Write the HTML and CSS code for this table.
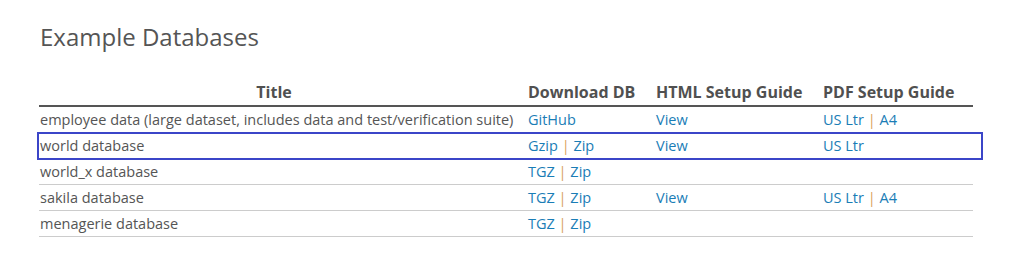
FILE: index.html
```html
<!DOCTYPE html>
<html>
<head>
<meta charset="utf-8">
<link rel="stylesheet" href="styles.css">
</head>
<body>
<main class="page">
  <h1 class="title">Example Databases</h1>
  <div class="table-wrap">
    <table class="db-table">
      <colgroup>
        <col class="c-title"><col class="c-dl"><col class="c-html"><col class="c-pdf">
      </colgroup>
      <thead>
        <tr>
          <th class="center">Title</th>
          <th>Download DB</th>
          <th>HTML Setup Guide</th>
          <th>PDF Setup Guide</th>
        </tr>
      </thead>
      <tbody>
        <tr>
          <td>employee data (large dataset, includes data and test/verification suite)</td>
          <td><a href="#">GitHub</a></td>
          <td><a href="#">View</a></td>
          <td><a href="#">US Ltr</a> <span class="sep">|</span> <a href="#">A4</a></td>
        </tr>
        <tr class="selected">
          <td>world database</td>
          <td><a href="#">Gzip</a> <span class="sep">|</span> <a href="#">Zip</a></td>
          <td><a href="#">View</a></td>
          <td><a href="#">US Ltr</a></td>
        </tr>
        <tr>
          <td>world_x database</td>
          <td><a href="#">TGZ</a> <span class="sep">|</span> <a href="#">Zip</a></td>
          <td></td>
          <td></td>
        </tr>
        <tr>
          <td>sakila database</td>
          <td><a href="#">TGZ</a> <span class="sep">|</span> <a href="#">Zip</a></td>
          <td><a href="#">View</a></td>
          <td><a href="#">US Ltr</a> <span class="sep">|</span> <a href="#">A4</a></td>
        </tr>
        <tr>
          <td>menagerie database</td>
          <td><a href="#">TGZ</a> <span class="sep">|</span> <a href="#">Zip</a></td>
          <td></td>
          <td></td>
        </tr>
      </tbody>
    </table>
    <div class="row-highlight"></div>
  </div>
</main>
</body>
</html>
```

FILE: styles.css
```css
html, body {
  margin: 0;
  padding: 0;
  background: #ffffff;
}
body {
  font-family: "Open Sans", "Liberation Sans", sans-serif;
  color: #555555;
}
.page {
  padding: 20px 0 0 39px;
}
.title {
  margin: 0 0 0 1px;
  font-size: 24px;
  font-weight: 400;
  color: #555555;
  line-height: 33px;
  height: 40px;
}
.table-wrap {
  position: relative;
  width: 934px;
  margin-top: 20px;
}
.db-table {
  width: 934px;
  table-layout: fixed;
  border-collapse: collapse;
  font-size: 14.5px;
}
.c-title { width: 489px; }
.c-dl { width: 128px; }
.c-html { width: 167px; }
.c-pdf { width: 150px; }
.db-table th {
  text-align: left;
  font-weight: 700;
  font-size: 16px;
  line-height: 20px;
  color: #505050;
  padding: 2px 0 3px 0;
  height: 20px;
  border-bottom: 2px solid #555555;
  white-space: nowrap;
}
.db-table th.center {
  text-align: center;
  padding-right: 19px;
}
.db-table td {
  padding: 0 0 0 1px;
  height: 25px;
  border-bottom: 1px solid #cccccc;
  white-space: nowrap;
  vertical-align: middle;
}
.db-table td + td { padding-left: 0; }
.db-table a {
  color: #1a7db6;
  text-decoration: none;
}
.sep {
  color: #d9a35c;
}
.row-highlight {
  position: absolute;
  left: -2px;
  top: 52px;
  width: 942px;
  height: 24px;
  border: 2px solid #3b45c8;
  pointer-events: none;
}
```
